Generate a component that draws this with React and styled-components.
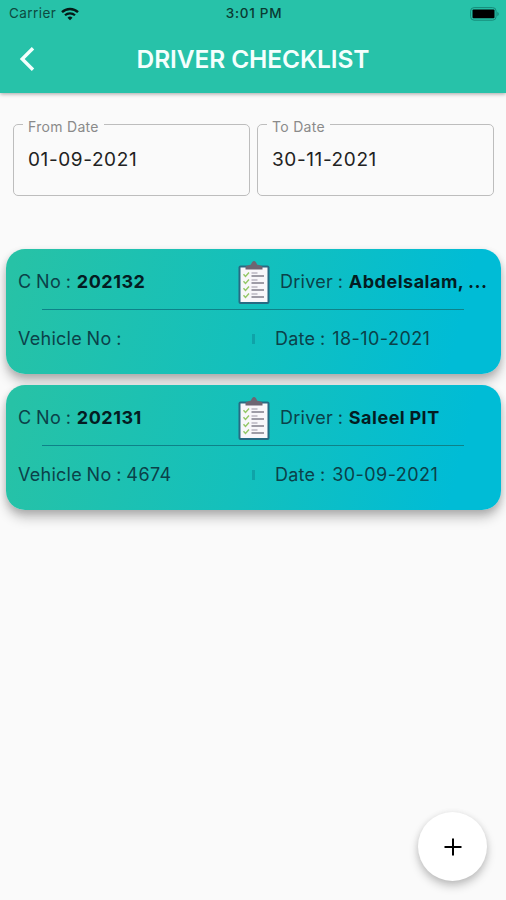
import React from "react"
import styled, { createGlobalStyle } from "styled-components"

const GlobalStyle = createGlobalStyle`
  * {
    box-sizing: border-box;
  }
  body {
    margin: 0;
    background: #fafafa;
    font-family: Inter, "Liberation Sans", sans-serif;
    color: #111;
  }
`

const Screen = styled.div`
  display: flex;
  flex-direction: column;
  width: 506px;
  height: 900px;
  overflow: hidden;
  background: #fafafa;
`

const Header = styled.header`
  height: 93px;
  flex: none;
  background: #27c2a9;
  box-shadow: 0 1px 4px rgba(0, 0, 0, 0.35);
`

const StatusBar = styled.div`
  display: grid;
  grid-template-columns: 1fr auto 1fr;
  align-items: center;
  height: 27px;
  padding: 0 7px 0 9px;
  font-size: 13.5px;
  line-height: 27px;
`

const Carrier = styled.div`
  display: flex;
  align-items: center;
  gap: 5px;
  color: #0d4a40;
  letter-spacing: 0.45px;
`

const Time = styled.div`
  color: #0a3a32;
  font-weight: 500;
  letter-spacing: 0.7px;
`

const BatteryIcon = styled.svg`
  justify-self: end;
`

const TitleBar = styled.div`
  display: grid;
  grid-template-columns: 54px 1fr 54px;
  align-items: center;
  height: 63px;
`

const BackIcon = styled.svg`
  justify-self: center;
`

const Title = styled.h1`
  margin: 0;
  text-align: center;
  white-space: nowrap;
  font-size: 24.5px;
  line-height: 30px;
  font-weight: 600;
  letter-spacing: -0.1px;
  color: #f4fffd;
`

const Filters = styled.div`
  display: flex;
  gap: 7px;
  padding: 24px 12px 0 13px;
`

const Field = styled.fieldset`
  flex: 1;
  min-width: 0;
  height: 79px;
  margin: 0;
  padding: 0 14px 0 9px;
  border: 1px solid #bdbdbd;
  border-radius: 5px;
`

const Label = styled.legend`
  padding: 5px 5px 0;
  font-size: 14px;
  line-height: 10px;
  letter-spacing: 0.3px;
  color: #8a8a8a;
`

const Value = styled.div`
  padding: 16px 5px 0;
  font-size: 19px;
  line-height: 24px;
  letter-spacing: 0.6px;
  color: #222;
`

const List = styled.div`
  display: flex;
  flex-direction: column;
  gap: 11px;
  padding: 53px 5px 0 6px;
`

const Card = styled.article`
  height: 125px;
  border-radius: 19px;
  background: linear-gradient(104deg, #27c2a6 2%, #13c0bd 50%, #00bcd6 90%);
  box-shadow: 0 8px 12px rgba(0, 0, 0, 0.22), 0 3px 7px rgba(0, 0, 0, 0.14);
`

const TopRow = styled.div`
  display: grid;
  grid-template-columns: 220px 32px 1fr;
  align-items: center;
  height: 60px;
  padding: 7px 12px 0;
`

const BottomRow = styled.div`
  display: grid;
  grid-template-columns: 234px 23px 1fr;
  align-items: center;
  height: 58px;
  padding: 0 12px;
`

const Text = styled.div`
  white-space: nowrap;
  font-size: 18px;
  line-height: 24px;
  letter-spacing: 0.25px;
  word-spacing: -0.6px;
  color: #0b4149;
  padding-left: ${(props) => props.$inset || 0}px;
  padding-bottom: ${(props) => props.$lift || 0}px;
`

const Data = styled.span`
  margin-left: ${(props) => props.$gap || 0}px;
  letter-spacing: 0.45px;
`

const Strong = styled.b`
  margin-left: 1px;
  font-weight: 700;
  letter-spacing: 0.5px;
  color: #041c22;
`

const Divider = styled.hr`
  height: 1px;
  margin: 0 37px 0 36px;
  border: 0;
  background: #0e8289;
`

const Tick = styled.span`
  width: 3px;
  height: 10px;
  background: #0fa3a8;
`

const Fab = styled.button`
  display: flex;
  align-items: center;
  justify-content: center;
  align-self: flex-end;
  width: 69px;
  height: 69px;
  margin: auto 19px 19px 0;
  padding: 0;
  border: 0;
  border-radius: 50%;
  background: #fff;
  box-shadow: 0 5px 10px rgba(0, 0, 0, 0.22), 0 1px 6px rgba(0, 0, 0, 0.08);
`

const entries = [
  { no: "202132", driver: "Abdelsalam, ...", vehicle: "", date: "18-10-2021" },
  { no: "202131", driver: "Saleel PIT", vehicle: "4674", date: "30-09-2021" },
]

const Wifi = () => (
  <svg width="18" height="14" viewBox="0 0 18 14" fill="none" stroke="#051a17">
    <path d="M1 5.2a11.5 11.5 0 0 1 16 0" strokeWidth="2.4" />
    <path d="M4 8.3a7.2 7.2 0 0 1 10 0" strokeWidth="2.2" />
    <path d="M9 13.2 6.5 10.8a3.6 3.6 0 0 1 5 0z" fill="#051a17" stroke="none" />
  </svg>
)

const Battery = () => (
  <BatteryIcon width="29" height="14" viewBox="0 0 29 14">
    <rect x="0.6" y="0.6" width="25.5" height="12.6" rx="3.5" fill="none" stroke="#168a79" />
    <rect x="2.5" y="2.6" width="22" height="8.6" rx="1" fill="#000" />
    <path d="M27.3 4.7q1.5 1 1.5 2.3t-1.5 2.3z" fill="#168a79" />
  </BatteryIcon>
)

const Clipboard = () => (
  <svg width="32" height="44" viewBox="0 0 32 44">
    <rect x="0.5" y="4.5" width="31" height="38.5" rx="2" fill="#276b83" />
    <rect x="2.5" y="6.5" width="27" height="34.5" fill="#f8f7fa" />
    <path d="M7.5 8.5V6q0-1 1.5-1.3l4-1.2q1-3.5 3-3.5t3 3.5l4 1.2q1.5.3 1.5 1.300v2.500z" fill="#6d6572" />
    {[12, 19, 26, 33].map((y) => (
      <g key={y} fill="none">
        <path d={`M5.5 ${y + 1.2}l2 2.3 3.5-4`} stroke="#93c865" strokeWidth="1.4" />
        <path d={`M13.5 ${y}h6`} stroke="#aaa6b2" strokeWidth="1.2" />
        <path d={`M13.5 ${y + 3}h12.5`} stroke="#777481" strokeWidth="1.4" />
      </g>
    ))}
  </svg>
)

const ChecklistCard = ({ entry }) => (
  <Card>
    <TopRow>
      <Text $lift={1}>
        C No : <Strong>{entry.no}</Strong>
      </Text>
      <Clipboard />
      <Text $inset={10} $lift={1}>
        Driver : <Strong>{entry.driver}</Strong>
      </Text>
    </TopRow>
    <Divider />
    <BottomRow>
      <Text>
        Vehicle No : <Data>{entry.vehicle}</Data>
      </Text>
      <Tick />
      <Text>
        Date : <Data $gap={2}>{entry.date}</Data>
      </Text>
    </BottomRow>
  </Card>
)

const App = () => (
  <Screen>
    <GlobalStyle />
    <Header>
      <StatusBar>
        <Carrier>
          Carrier
          <Wifi />
        </Carrier>
        <Time>3:01 PM</Time>
        <Battery />
      </StatusBar>
      <TitleBar>
        <BackIcon width="16" height="26" viewBox="0 0 16 26">
          <path d="M14 2.2 3.2 13 14 23.8" fill="none" stroke="#f4fffd" strokeWidth="3.4" />
        </BackIcon>
        <Title>DRIVER CHECKLIST</Title>
      </TitleBar>
    </Header>
    <Filters>
      <Field>
        <Label>From Date</Label>
        <Value>01-09-2021</Value>
      </Field>
      <Field>
        <Label>To Date</Label>
        <Value>30-11-2021</Value>
      </Field>
    </Filters>
    <List>
      {entries.map((entry) => (
        <ChecklistCard key={entry.no} entry={entry} />
      ))}
    </List>
    <Fab aria-label="Add">
      <svg width="18" height="18" viewBox="0 0 18 18">
        <path d="M9 0.5v17M0.5 9h17" stroke="#000" strokeWidth="2" />
      </svg>
    </Fab>
  </Screen>
)

export default App
